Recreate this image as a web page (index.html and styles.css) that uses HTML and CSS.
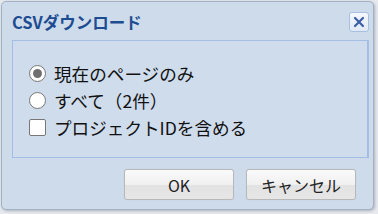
FILE: index.html
```html
<!DOCTYPE html>
<html lang="ja">
<head>
    <meta charset="UTF-8">
    <meta name="viewport" content="width=device-width, initial-scale=1.0">
    <title>CSVダウンロード</title>
    <link rel="stylesheet" href="styles.css">
</head>
<body>
    <!-- Dialog -->
    <section class="dialog">
        <div class="titlebar">
            <h1>CSVダウンロード</h1>
            <button class="close" title="閉じる">
                <svg width="12" height="12" viewBox="0 0 12 12">
                    <path d="M2 2 L10 10 M10 2 L2 10" stroke="#3b5ea8" stroke-width="2.2" stroke-linecap="round"/>
                </svg>
            </button>
        </div>
        <div class="content">
            <label class="option">
                <span class="radio checked"></span>現在のページのみ
            </label>
            <label class="option">
                <span class="radio"></span>すべて（2件）
            </label>
            <label class="option">
                <span class="checkbox"></span>プロジェクトIDを含める
            </label>
        </div>
        <div class="button-area">
            <button class="btn">OK</button>
            <button class="btn">キャンセル</button>
        </div>
    </section>
</body>
</html>
```

FILE: styles.css
```css
/* General styling */
* {
    margin: 0;
    padding: 0;
    box-sizing: border-box;
}
body {
    width: 378px;
    height: 214px;
    padding: 1px 4px 4px 1px;
    background: #e6eaf0;
    font-family: "Noto Sans CJK JP", "Noto Sans", sans-serif;
}
/* Dialog frame */
.dialog {
    display: flex;
    flex-direction: column;
    height: 209px;
    padding: 0 4px 0 10px;
    border: 1px solid #a2b1c6;
    border-radius: 5px;
    background: #cedbeb;
    box-shadow: 1px 1px 3px rgba(0,0,0,.25);
}
.titlebar {
    display: flex;
    align-items: center;
    justify-content: space-between;
    height: 38px;
    padding-top: 1px;
}
.titlebar h1 {
    color: #1d4c91;
    font-size: 16.5px;
    font-weight: 700;
}
.close {
    display: flex;
    align-items: center;
    justify-content: center;
    width: 20px;
    height: 20px;
    border: 1px solid #a9bfe2;
    border-radius: 3px;
    background: linear-gradient(#f6f8fc, #dfe8f5);
}
/* Options panel */
.content {
    display: flex;
    flex-direction: column;
    gap: 6px;
    height: 118px;
    padding: 22px 0 0 16px;
    border: 1px solid #a3bde6;
    border-right-width: 2px;
    background: #cfdcec;
}
.option {
    display: flex;
    align-items: center;
    gap: 8px;
    height: 21px;
    color: #111;
    font-size: 17.6px;
}
.radio, .checkbox {
    flex-shrink: 0;
    width: 17px;
    height: 17px;
    border: 1px solid #777;
    background: #fff;
}
.radio {
    position: relative;
    border-radius: 50%;
}
.radio.checked::before {
    content: '';
    position: absolute;
    top: 3px;
    left: 3px;
    width: 9px;
    height: 9px;
    border-radius: 50%;
    background: #6f6f6f;
}
.checkbox {
    border-radius: 2px;
}
/* Buttons */
.button-area {
    display: flex;
    justify-content: flex-end;
    gap: 12px;
    padding: 11px 13px 0 0;
}
.btn {
    width: 110px;
    height: 31px;
    color: #222;
    font-family: "Noto Sans CJK JP", "Noto Sans", sans-serif;
    font-size: 16px;
    border: 1px solid #b8b8b8;
    border-radius: 3px;
    background: linear-gradient(#fafafa 0%, #f0f0f0 50%, #e2e2e2 51%, #e6e6e6 100%);
    box-shadow: 0 0 1px rgba(0,0,0,.1);
}
```
